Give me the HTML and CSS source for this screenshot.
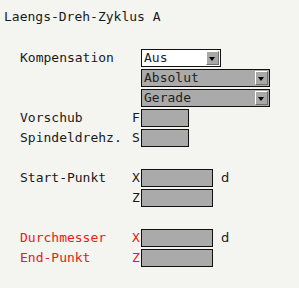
FILE: index.html
```html
<!DOCTYPE html>
<html lang="de">
<head>
  <meta charset="UTF-8" />
  <title>Laengs-Dreh-Zyklus A</title>
  <link rel="stylesheet" href="styles.css">
</head>
<body>
  <h1 class="title">Laengs-Dreh-Zyklus A</h1>

  <div class="form">
    <div class="group">
      <span class="label">Kompensation</span>
      <span class="axis"></span>
      <div class="select select-short white">
        <span class="select-text">Aus</span>
        <span class="select-btn"></span>
      </div>
      <span class="unit"></span>

      <span class="label"></span>
      <span class="axis"></span>
      <div class="select select-long">
        <span class="select-text">Absolut</span>
        <span class="select-btn"></span>
      </div>
      <span class="unit"></span>

      <span class="label"></span>
      <span class="axis"></span>
      <div class="select select-long">
        <span class="select-text">Gerade</span>
        <span class="select-btn"></span>
      </div>
      <span class="unit"></span>

      <span class="label">Vorschub</span>
      <span class="axis">F</span>
      <div class="field field-short"></div>
      <span class="unit"></span>

      <span class="label">Spindeldrehz.</span>
      <span class="axis">S</span>
      <div class="field field-short"></div>
      <span class="unit"></span>
    </div>

    <div class="group">
      <span class="label">Start-Punkt</span>
      <span class="axis">X</span>
      <div class="field field-mid"></div>
      <span class="unit">d</span>

      <span class="label"></span>
      <span class="axis">Z</span>
      <div class="field field-mid"></div>
      <span class="unit"></span>
    </div>

    <div class="group red">
      <span class="label">Durchmesser</span>
      <span class="axis">X</span>
      <div class="field field-mid"></div>
      <span class="unit">d</span>

      <span class="label">End-Punkt</span>
      <span class="axis">Z</span>
      <div class="field field-mid"></div>
      <span class="unit"></span>
    </div>
  </div>
</body>
</html>
```

FILE: styles.css
```css
* {
  box-sizing: border-box;
  margin: 0;
  padding: 0;
}
body {
  font-family: 'DejaVu Sans Mono', monospace;
  font-size: 13px;
  color: #1a1a1a;
  background: #f4f4f0;
  padding: 7px 0 0 4px;
}
.title {
  font-size: 13px;
  font-weight: 400;
  line-height: 20px;
  height: 20px;
}
.form {
  margin: 22px 0 0 16px;
}
.group {
  display: grid;
  grid-template-columns: 112px 9px auto 1fr;
  grid-auto-rows: 18px;
  row-gap: 2px;
  align-items: center;
  line-height: 18px;
}
.group + .group {
  margin-top: 22px;
}
.red {
  color: #e0201c;
}
.unit {
  padding-left: 8px;
  font-family: 'DejaVu Sans', sans-serif;
  color: #1a1a1a;
}
.field {
  height: 18px;
  border: 1px solid #111;
  background: #aaaaaa;
}
.field-short { width: 48px; }
.field-mid { width: 72px; }

.select {
  display: flex;
  height: 18px;
  border: 1px solid #111;
  background: #aaaaaa;
  color: #222;
}
.select.white { background: #fff; }
.select-short { width: 80px; }
.select-long { width: 129px; }
.select-text {
  flex: 1;
  padding-left: 2px;
  line-height: 16px;
}
.select-btn {
  position: relative;
  width: 13px;
  margin: 1px 1px 1px 0;
  background: #a8a8a8;
  border-top: 1px solid #fff;
  border-left: 1px solid #fff;
  border-right: 1px solid #707070;
  border-bottom: 1px solid #707070;
}
.select-btn::after {
  content: '';
  position: absolute;
  left: 2px;
  top: 5px;
  border-left: 3px solid transparent;
  border-right: 3px solid transparent;
  border-top: 4px solid #000;
}
```
